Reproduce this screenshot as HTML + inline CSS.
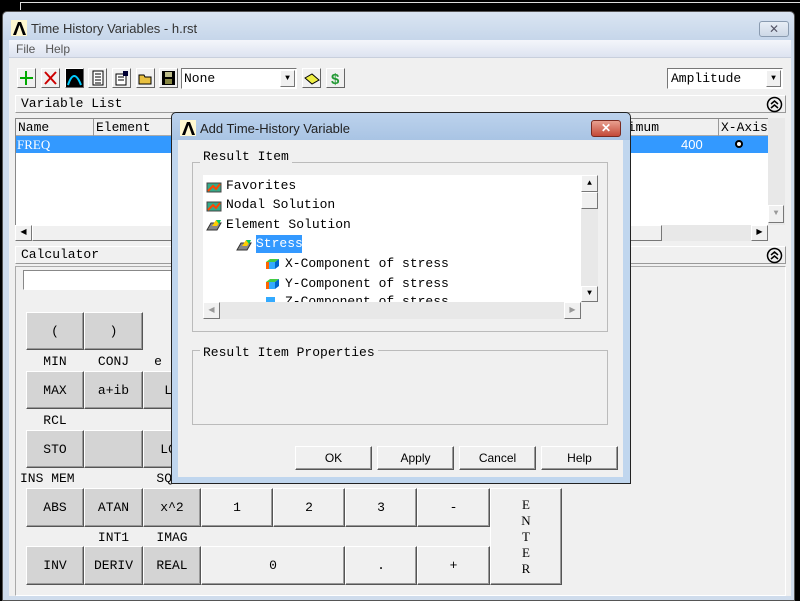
<!DOCTYPE html>
<html><head><meta charset="utf-8"><style>
*{margin:0;padding:0;box-sizing:border-box}
body{width:800px;height:599px;overflow:hidden;background:#000;position:relative;font-family:"Liberation Mono",monospace;font-size:13px;color:#000}
.a{position:absolute}
.ui{font-family:"Liberation Sans",sans-serif;font-size:12px}
.btn{position:absolute;background:#d4d4d4;border:1px solid;border-color:#fff #555 #555 #fff;box-shadow:inset -1px -1px 0 #999;display:flex;align-items:center;justify-content:center;font-size:13px}
.lt{background:#f0f0f0}
.lbl{position:absolute;font-size:13px;text-align:center}
.ico{position:absolute;width:19px;height:20px;border:1px solid;border-color:#fff #666 #666 #fff;background:#f0f0f0}
.sb{position:absolute;background:#f0f0f0;border:1px solid;border-color:#fff #777 #777 #fff}
.ti{position:absolute;font-size:13px;white-space:nowrap}
.ic{position:absolute;width:16px;height:13px}
</style></head><body>
<div class="a" style="left:20px;top:2px;width:780px;height:8px;border-top:1px solid #ddd;border-left:1px solid #ddd"></div>
<div class="a" style="left:2px;top:11px;width:793px;height:590px;background:#cfdcec;border:1px solid #555;border-radius:5px 5px 0 0"></div>
<div class="a" style="left:3px;top:12px;width:791px;height:28px;background:linear-gradient(#dae5f2,#c6d6ea);border-radius:5px 5px 0 0"></div>
<div class="a" style="left:11px;top:20px;width:16px;height:16px;background:#fff8d0"><svg width="16" height="16"><path d="M2 15 L7 2 H10 L15 15 H12 L8.5 5 L5 15Z" fill="#000"/></svg></div>
<div class="a ui" style="left:31px;top:21px;font-size:13px;color:#333">Time History Variables - h.rst</div>
<div class="a" style="left:759px;top:21px;width:30px;height:16px;border:1px solid #8a9bb0;border-radius:3px;background:linear-gradient(#e8eef6,#cdd8e6);color:#556;font-size:12px;text-align:center;line-height:14px;font-family:'Liberation Sans'">✕</div>
<div class="a" style="left:9px;top:40px;width:782px;height:18px;background:linear-gradient(#f4f6fb,#dde3f0);border-bottom:1px solid #c8cfdc"></div>
<div class="a ui" style="left:16px;top:42px;color:#555;font-size:12px">File&nbsp;&nbsp;&nbsp;Help</div>
<div class="a" style="left:9px;top:58px;width:782px;height:538px;background:#f0f0f0"></div>
<div class="ico" style="left:17px;top:68px"><svg width="17" height="18"><path d="M8 2V16M2 9H15" stroke="#0a0" stroke-width="2"/></svg></div>
<div class="ico" style="left:41px;top:68px"><svg width="17" height="18"><path d="M3 3L14 15M14 3L3 15" stroke="#c00" stroke-width="2"/></svg></div>
<div class="ico" style="left:65px;top:68px;background:#000"><svg width="17" height="18"><path d="M2 16Q8 -2 15 16" stroke="#0cf" stroke-width="2" fill="none"/></svg></div>
<div class="ico" style="left:88px;top:68px"><svg width="17" height="18"><rect x="4" y="2" width="10" height="14" fill="#fff" stroke="#000"/><path d="M6 5H12M6 8H12M6 11H12M6 14H12" stroke="#000"/></svg></div>
<div class="ico" style="left:112px;top:68px"><svg width="17" height="18"><rect x="3" y="5" width="10" height="11" fill="#fff" stroke="#000"/><path d="M5 8H11M5 11H11" stroke="#000"/><rect x="10" y="2" width="5" height="5" fill="#003"/></svg></div>
<div class="ico" style="left:136px;top:68px"><svg width="17" height="18"><path d="M2 6H7L8 8H14V15H2Z" fill="#e8c040" stroke="#000"/></svg></div>
<div class="ico" style="left:159px;top:68px"><svg width="17" height="18"><rect x="2" y="2" width="13" height="14" fill="#000"/><rect x="5" y="3" width="7" height="5" fill="#bb8"/><rect x="5" y="10" width="7" height="5" fill="#884"/></svg></div>
<div class="a" style="left:181px;top:68px;width:116px;height:21px;background:#fff;border:1px solid;border-color:#777 #fff #fff #777"></div>
<div class="ti" style="left:184px;top:71px">None</div>
<div class="sb" style="left:280px;top:70px;width:15px;height:17px;font-size:8px;text-align:center;line-height:15px">▼</div>
<div class="ico" style="left:302px;top:68px"><svg width="17" height="18"><path d="M2 9L9 5L16 11L9 15Z" fill="#ee4" stroke="#000"/></svg></div>
<div class="ico" style="left:326px;top:68px"><svg width="17" height="18"><text x="4" y="15" font-size="15" fill="#293" font-family="Liberation Sans" font-weight="bold">$</text></svg></div>
<div class="a" style="left:667px;top:68px;width:116px;height:21px;background:#fff;border:1px solid;border-color:#777 #fff #fff #777"></div>
<div class="ti" style="left:671px;top:71px">Amplitude</div>
<div class="sb" style="left:766px;top:70px;width:15px;height:17px;font-size:8px;text-align:center;line-height:15px">▼</div>
<div class="a" style="left:15px;top:95px;width:771px;height:18px;border:1px solid;border-color:#fff #999 #999 #fff"></div>
<div class="ti" style="left:21px;top:96px">Variable List</div>
<svg class="a" style="left:766px;top:96px" width="17" height="17"><circle cx="8.5" cy="8.5" r="7" fill="none" stroke="#000" stroke-width="1.5"/><path d="M5 8L8.5 5L12 8M5 12L8.5 9L12 12" stroke="#000" stroke-width="1.5" fill="none"/></svg>
<div class="a" style="left:15px;top:118px;width:753px;height:107px;background:#fff;border-left:1px solid #888;border-top:1px solid #888"></div>
<div class="a" style="left:16px;top:119px;width:752px;height:17px;background:#f0f0f0;border-bottom:1px solid #aaa"></div>
<div class="ti" style="left:18px;top:120px">Name</div>
<div class="a" style="left:93px;top:119px;width:1px;height:17px;background:#999"></div>
<div class="ti" style="left:96px;top:120px">Element</div>
<div class="ti" style="left:620px;top:120px">ximum</div>
<div class="a" style="left:718px;top:119px;width:1px;height:17px;background:#999"></div>
<div class="ti" style="left:721px;top:120px">X-Axis</div>
<div class="a" style="left:16px;top:136px;width:752px;height:17px;background:#3399ff"></div>
<div class="ti" style="left:17px;top:137px;color:#fff;font-family:'Liberation Serif'">FREQ</div>
<div class="ti" style="left:681px;top:137px;color:#fff;font-family:'Liberation Sans'">400</div>
<div class="a" style="left:735px;top:140px;width:8px;height:8px;border-radius:50%;background:#fff;border:2px solid #000"></div>
<div class="a" style="left:768px;top:118px;width:17px;height:107px;background:#e8e8e8"></div>
<div class="sb" style="left:768px;top:205px;width:16px;height:18px;font-size:8px;color:#999;text-align:center;line-height:16px">▼</div>
<div class="a" style="left:15px;top:225px;width:753px;height:16px;background:#e8e8e8"></div>
<div class="sb" style="left:15px;top:225px;width:17px;height:16px;font-size:8px;text-align:center;line-height:14px">◀</div>
<div class="sb" style="left:32px;top:225px;width:630px;height:16px"></div>
<div class="sb" style="left:751px;top:225px;width:17px;height:16px;font-size:8px;text-align:center;line-height:14px">▶</div>
<div class="a" style="left:15px;top:246px;width:771px;height:18px;border:1px solid;border-color:#fff #999 #999 #fff"></div>
<div class="ti" style="left:21px;top:247px">Calculator</div>
<svg class="a" style="left:766px;top:247px" width="17" height="17"><circle cx="8.5" cy="8.5" r="7" fill="none" stroke="#000" stroke-width="1.5"/><path d="M5 8L8.5 5L12 8M5 12L8.5 9L12 12" stroke="#000" stroke-width="1.5" fill="none"/></svg>
<div class="a" style="left:15px;top:266px;width:771px;height:330px;border:1px solid;border-color:#aaa #fff #fff #aaa"></div>
<div class="a" style="left:23px;top:270px;width:160px;height:20px;background:#fff;border:1px solid;border-color:#888 #fff #fff #888"></div>
<div class="btn" style="left:26px;top:312px;width:58px;height:38px">(</div>
<div class="btn" style="left:84px;top:312px;width:59px;height:38px">)</div>
<div class="lbl" style="left:26px;top:354px;width:58px">MIN</div>
<div class="lbl" style="left:84px;top:354px;width:59px">CONJ</div>
<div class="lbl" style="left:143px;top:354px;width:30px">e</div>
<div class="btn" style="left:26px;top:371px;width:58px;height:38px">MAX</div>
<div class="btn" style="left:84px;top:371px;width:59px;height:38px">a+ib</div>
<div class="btn" style="left:143px;top:371px;width:58px;height:38px">LN</div>
<div class="lbl" style="left:26px;top:413px;width:58px">RCL</div>
<div class="btn" style="left:26px;top:430px;width:58px;height:38px">STO</div>
<div class="btn" style="left:84px;top:430px;width:59px;height:38px"></div>
<div class="btn" style="left:143px;top:430px;width:58px;height:38px">LOG</div>
<div class="lbl" style="left:20px;top:471px;width:66px;text-align:left">INS MEM</div>
<div class="lbl" style="left:143px;top:471px;width:58px">SQRT</div>
<div class="btn" style="left:26px;top:488px;width:58px;height:39px">ABS</div>
<div class="btn" style="left:84px;top:488px;width:59px;height:39px">ATAN</div>
<div class="btn" style="left:143px;top:488px;width:58px;height:39px">x^2</div>
<div class="btn lt" style="left:201px;top:488px;width:72px;height:39px">1</div>
<div class="btn lt" style="left:273px;top:488px;width:72px;height:39px">2</div>
<div class="btn lt" style="left:345px;top:488px;width:72px;height:39px">3</div>
<div class="btn lt" style="left:417px;top:488px;width:73px;height:39px">-</div>
<div class="btn lt" style="left:490px;top:488px;width:72px;height:97px;line-height:16px;text-align:center;font-family:'Liberation Serif'">E<br>N<br>T<br>E<br>R</div>
<div class="lbl" style="left:84px;top:530px;width:59px">INT1</div>
<div class="lbl" style="left:143px;top:530px;width:58px">IMAG</div>
<div class="btn" style="left:26px;top:546px;width:58px;height:39px">INV</div>
<div class="btn" style="left:84px;top:546px;width:59px;height:39px">DERIV</div>
<div class="btn" style="left:143px;top:546px;width:58px;height:39px">REAL</div>
<div class="btn lt" style="left:201px;top:546px;width:144px;height:39px">0</div>
<div class="btn lt" style="left:345px;top:546px;width:72px;height:39px">.</div>
<div class="btn lt" style="left:417px;top:546px;width:73px;height:39px">+</div>
<div class="a" style="left:171px;top:112px;width:460px;height:372px;background:#c0d6ee;border:1px solid #222;border-radius:5px 5px 0 0"></div>
<div class="a" style="left:172px;top:113px;width:458px;height:27px;background:linear-gradient(#bcd2ec,#a9c4e4);border-radius:5px 5px 0 0"></div>
<div class="a" style="left:180px;top:120px;width:16px;height:16px;background:#fff8d0"><svg width="16" height="16"><path d="M2 15 L7 2 H10 L15 15 H12 L8.5 5 L5 15Z" fill="#000"/></svg></div>
<div class="a ui" style="left:200px;top:121px;font-size:13px;color:#222">Add Time-History Variable</div>
<div class="a" style="left:591px;top:120px;width:30px;height:17px;border:1px solid #7a2a20;border-radius:3px;background:linear-gradient(#e8a090,#c44a38);color:#fff;font-size:12px;text-align:center;line-height:15px;font-family:'Liberation Sans';font-weight:bold">✕</div>
<div class="a" style="left:178px;top:140px;width:445px;height:337px;background:#f0f0f0"></div>
<div class="a" style="left:192px;top:162px;width:416px;height:170px;border:1px solid #bbb"></div>
<div class="ti" style="left:200px;top:149px;background:#f0f0f0;padding:0 3px">Result Item</div>
<div class="a" style="left:203px;top:175px;width:378px;height:127px;background:#fff"></div>
<div class="a" style="left:581px;top:175px;width:17px;height:127px;background:#e8e8e8"></div>
<div class="sb" style="left:581px;top:175px;width:17px;height:17px;font-size:8px;text-align:center;line-height:15px">▲</div>
<div class="sb" style="left:581px;top:192px;width:17px;height:17px"></div>
<div class="sb" style="left:581px;top:286px;width:17px;height:16px;font-size:8px;text-align:center;line-height:14px">▼</div>
<div class="a" style="left:203px;top:302px;width:378px;height:17px;background:#e8e8e8"></div>
<div class="sb" style="left:203px;top:302px;width:17px;height:17px;font-size:8px;color:#999;text-align:center;line-height:15px">◀</div>
<div class="sb" style="left:564px;top:302px;width:17px;height:17px;font-size:8px;color:#999;text-align:center;line-height:15px">▶</div>
<svg class="ic" style="left:206px;top:180px"><rect x="1" y="3" width="14" height="9" fill="#3a8" stroke="#444"/><path d="M2 11L7 6L10 9L14 4" stroke="#f40" stroke-width="2" fill="none"/></svg>
<div class="ti" style="left:226px;top:178px">Favorites</div>
<svg class="ic" style="left:206px;top:199px"><rect x="1" y="3" width="14" height="9" fill="#3a8" stroke="#444"/><path d="M2 11L7 6L10 9L14 4" stroke="#f40" stroke-width="2" fill="none"/></svg>
<div class="ti" style="left:226px;top:197px">Nodal Solution</div>
<svg class="ic" style="left:206px;top:218px"><path d="M1 12L5 5H15L11 12Z" fill="#888" stroke="#333"/><path d="M6 8L10 2H15L11 8Z" fill="#fc0"/><path d="M10 2H15L13 6Z" fill="#0c6"/></svg>
<div class="ti" style="left:226px;top:217px">Element Solution</div>
<svg class="ic" style="left:236px;top:238px"><path d="M1 12L5 5H15L11 12Z" fill="#888" stroke="#333"/><path d="M6 8L10 2H15L11 8Z" fill="#fc0"/><path d="M10 2H15L13 6Z" fill="#0c6"/></svg>
<div class="a" style="left:256px;top:235px;width:46px;height:18px;background:#3399ff"></div>
<div class="ti" style="left:256px;top:236px;color:#fff">Stress</div>
<svg class="ic" style="left:264px;top:257px"><path d="M2 5L6 2H15L11 5Z" fill="#4c4"/><rect x="2" y="5" width="9" height="7" fill="#f60"/><path d="M11 5L15 2V9L11 12Z" fill="#06c"/><rect x="5" y="5" width="6" height="7" fill="#3af"/></svg>
<div class="ti" style="left:285px;top:256px">X-Component of stress</div>
<svg class="ic" style="left:264px;top:277px"><path d="M2 5L6 2H15L11 5Z" fill="#4c4"/><rect x="2" y="5" width="9" height="7" fill="#f60"/><path d="M11 5L15 2V9L11 12Z" fill="#06c"/><rect x="5" y="5" width="6" height="7" fill="#3af"/></svg>
<div class="ti" style="left:285px;top:276px">Y-Component of stress</div>
<div class="a" style="left:203px;top:295px;width:378px;height:7px;overflow:hidden"><div class="ti" style="left:82px;top:-1px">Z-Component of stress</div><svg class="ic" style="left:61px;top:0px"><rect x="2" y="2" width="9" height="7" fill="#3af"/></svg></div>
<div class="a" style="left:192px;top:350px;width:416px;height:75px;border:1px solid #bbb"></div>
<div class="ti" style="left:200px;top:345px;background:#f0f0f0;padding:0 3px">Result Item Properties</div>
<div class="btn lt ui" style="left:295px;top:446px;width:77px;height:24px;font-size:12px;font-family:'Liberation Sans'">OK</div>
<div class="btn lt ui" style="left:377px;top:446px;width:77px;height:24px;font-size:12px;font-family:'Liberation Sans'">Apply</div>
<div class="btn lt ui" style="left:459px;top:446px;width:77px;height:24px;font-size:12px;font-family:'Liberation Sans'">Cancel</div>
<div class="btn lt ui" style="left:541px;top:446px;width:77px;height:24px;font-size:12px;font-family:'Liberation Sans'">Help</div>
</body></html>
